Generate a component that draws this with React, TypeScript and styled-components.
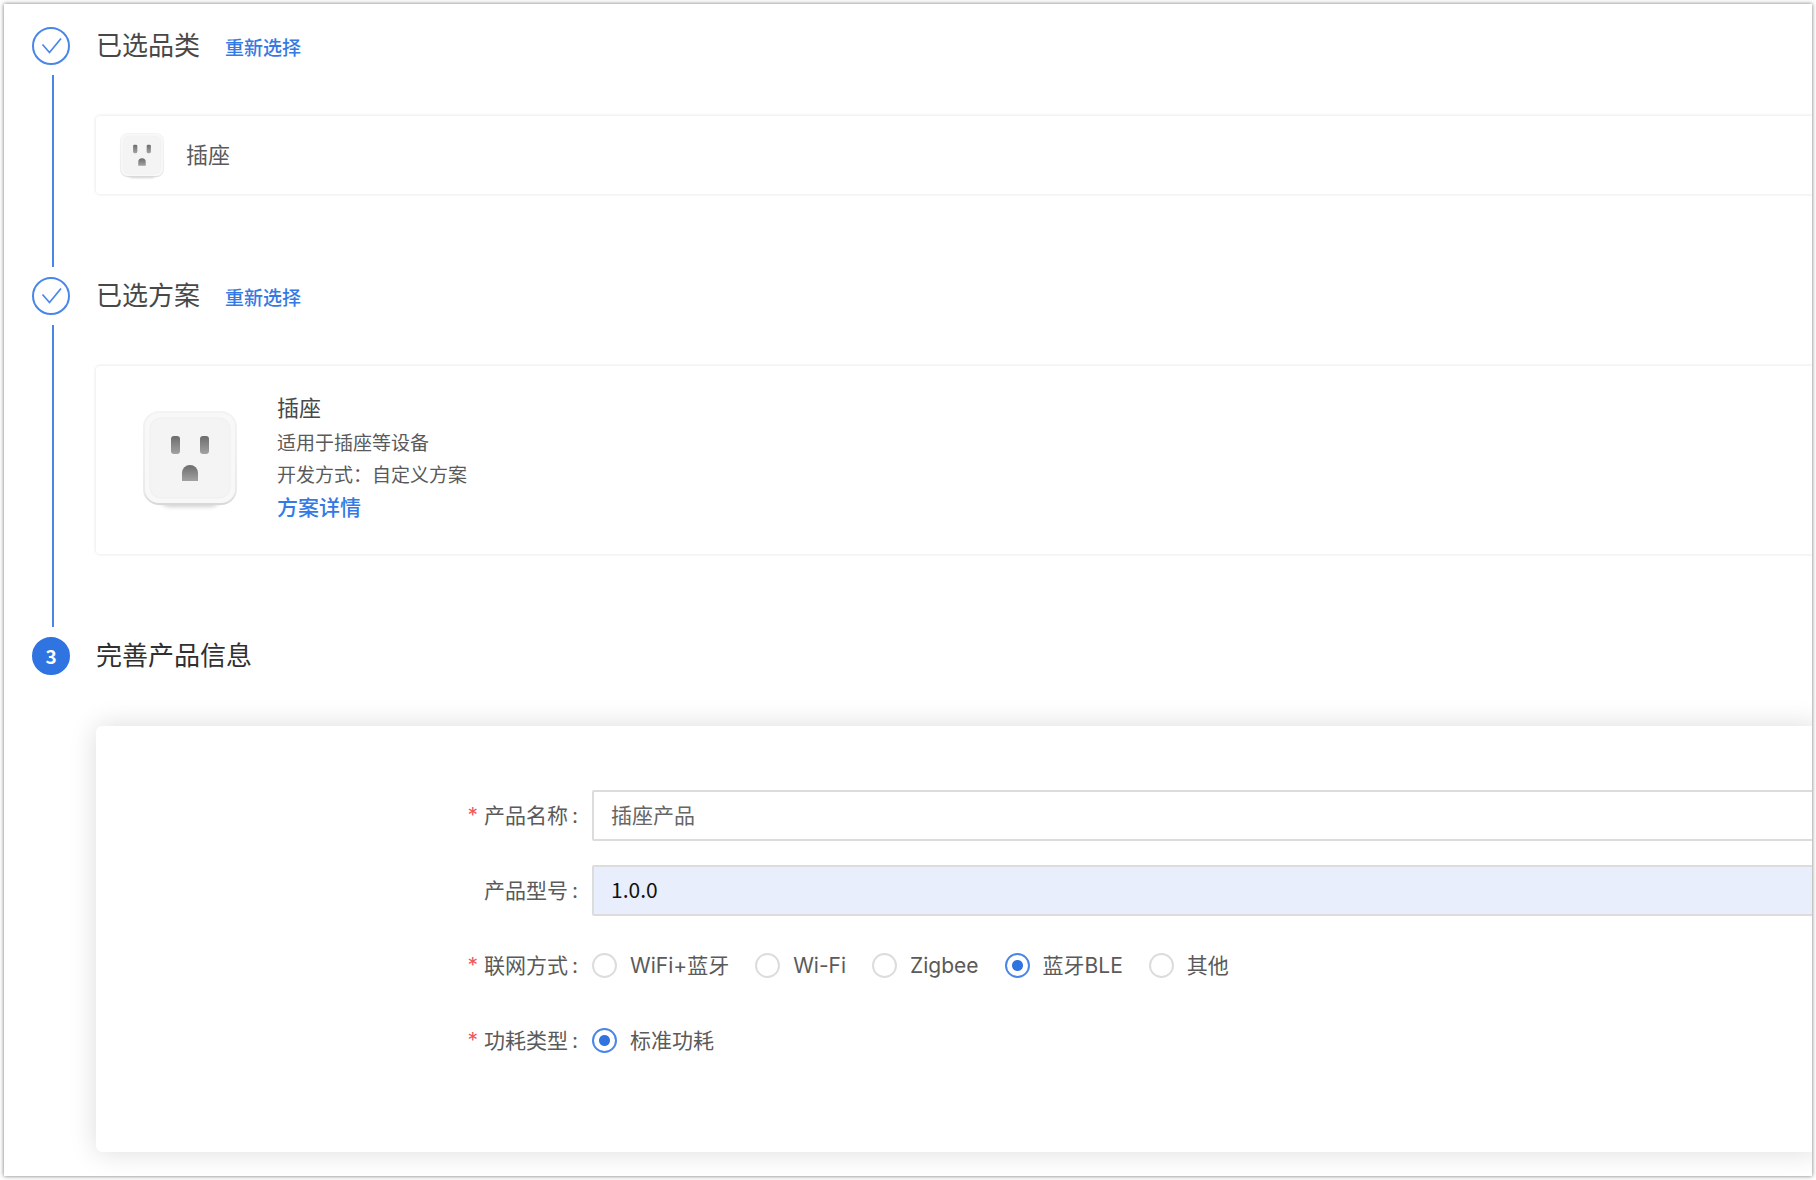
import React, { useState } from "react";
import styled, { createGlobalStyle, css } from "styled-components";

const blue = "#2f74e0";
const linkBlue = "#3579e4";
const lineBlue = "#4a86e8";
const cjkFont = `"Noto Sans CJK SC", "Noto Sans", sans-serif`;

const GlobalStyle = createGlobalStyle`
  *, *::before, *::after { box-sizing: border-box; }
  body {
    margin: 0;
    background: #fdfdfd;
    color: #5a5a5a;
    font-family: Inter, "Noto Sans CJK SC", sans-serif;
    font-size: 21px;
    line-height: 32px;
  }
`;

const Frame = styled.main`
  margin: 4px;
  padding: 22px 0 24px 28px;
  overflow: hidden;
  background: #fff;
  box-shadow: 0 0 4px rgba(0, 0, 0, 0.55);
`;

const StepRow = styled.section`
  display: grid;
  grid-template-columns: 38px minmax(0, 1fr);
  column-gap: 26px;
`;

const Rail = styled.div`
  display: flex;
  flex-direction: column;
`;

const Marker = styled.span<{ $active?: boolean }>`
  display: flex;
  flex: none;
  align-items: center;
  justify-content: center;
  width: 38px;
  height: 38px;
  margin: 1px 0;
  border: 2px solid ${(p) => (p.$active ? blue : lineBlue)};
  border-radius: 50%;
  background: ${(p) => (p.$active ? blue : "#fff")};
  color: #fff;
  font-family: ${cjkFont};
  font-size: 19px;
  font-weight: 700;
`;

const Line = styled.span`
  flex: 1;
  width: 2px;
  margin: 9px 0 9px 20px;
  background: ${lineBlue};
`;

const Body = styled.div<{ $last?: boolean }>`
  padding-bottom: ${(p) => (p.$last ? 0 : 82)}px;
`;

const Header = styled.header`
  display: flex;
  align-items: baseline;
  gap: 25px;
  height: 40px;
  margin-bottom: 50px;
  font-family: ${cjkFont};
`;

const Title = styled.h2<{ $active?: boolean }>`
  margin: 0;
  color: ${(p) => (p.$active ? "#303030" : "#484848")};
  font-size: 26px;
  font-weight: 400;
  line-height: 36px;
`;

const Link = styled.a<{ $large?: boolean }>`
  color: ${linkBlue};
  font-size: ${(p) => (p.$large ? 21 : 19)}px;
  font-weight: 500;
  text-decoration: none;
`;

const surface = css`
  margin-right: -8px;
  border-radius: 4px;
  background: #fff;
`;

const Card = styled.div<{ $large?: boolean }>`
  ${surface}
  display: flex;
  align-items: center;
  gap: ${(p) => (p.$large ? 40 : 22)}px;
  padding: ${(p) => (p.$large ? "26px 47px 30px" : "16px 24px")};
  min-height: 78px;
  box-shadow: 0 0 3px 1px rgba(0, 0, 0, 0.08);
`;

const CardName = styled.span`
  font-size: 22px;
`;

const Details = styled.div`
  display: flex;
  flex-direction: column;
  align-items: flex-start;
  font-size: 19px;
`;

const DetailsTitle = styled.h3`
  margin: 0 0 4px;
  color: #484848;
  font-size: 22px;
  font-weight: 400;
`;

const DetailsLine = styled.p`
  margin: 0;
`;

const Panel = styled.form`
  ${surface}
  display: flex;
  flex-direction: column;
  gap: 24px;
  padding: 64px 0 86px;
  border-radius: 6px;
  box-shadow: 0 0 28px rgba(0, 0, 0, 0.14);
`;

const Field = styled.div`
  display: flex;
  align-items: center;
  height: 51px;
`;

const FieldLabel = styled.label<{ $required?: boolean }>`
  flex: none;
  width: 496px;
  padding-right: 14px;
  text-align: right;

  &::before {
    content: "${(p) => (p.$required ? "*" : "")}";
    margin-right: 6px;
    color: #f0585c;
  }

  &::after {
    content: ":";
    margin-left: 4px;
  }
`;

const TextInput = styled.input<{ $filled?: boolean }>`
  flex: 1;
  min-width: 0;
  height: 51px;
  padding: 0 17px 4px;
  border: 2px solid #dcdcdc;
  border-radius: 2px;
  outline: none;
  background: ${(p) => (p.$filled ? "#e8eefc" : "#fff")};
  color: ${(p) => (p.$filled ? "#111" : "#666")};
  font-family: ${cjkFont};
  font-size: 21px;
`;

const Options = styled.div`
  display: flex;
  align-items: center;
  gap: 26px;
`;

const Option = styled.label`
  display: flex;
  align-items: center;
  gap: 13px;
`;

const Radio = styled.input`
  appearance: none;
  width: 25px;
  height: 25px;
  margin: 0;
  border: 2px solid #dcdcdc;
  border-radius: 50%;
  background: #fff;

  &:checked {
    border-color: ${lineBlue};
    background: radial-gradient(circle, ${blue} 5px, #fff 6px);
  }
`;

const Check = () => (
  <svg width="34" height="34" viewBox="0 0 34 34" fill="none" aria-hidden="true">
    <path d="M8.5 15.5L15.5 23.5L27 9.5" stroke={lineBlue} strokeWidth="1.7" />
  </svg>
);

/* Wall socket: rounded plate, two blade slots and the earth pin. */
const Socket = ({ size, id }: { size: number; id: string }) => (
  <svg width={size} height={size} viewBox="0 0 94 94" overflow="visible" aria-hidden="true">
    <defs>
      <linearGradient id={`${id}-hole`} x1="0" y1="0" x2="0" y2="1">
        <stop offset="0" stopColor="#6c6c6c" />
        <stop offset="1" stopColor="#a2a2a2" />
      </linearGradient>
      <linearGradient id={`${id}-edge`} x1="0" y1="0" x2="0" y2="1">
        <stop offset="0" stopColor="#f3f3f3" />
        <stop offset="0.85" stopColor="#ebebeb" />
        <stop offset="1" stopColor="#d8d8d8" />
      </linearGradient>
      <filter id={`${id}-blur`} x="-20%" y="-20%" width="140%" height="150%">
        <feGaussianBlur stdDeviation="2" />
      </filter>
    </defs>
    <rect x="12" y="22" width="70" height="74" rx="16" fill="#000" opacity="0.18" filter={`url(#${id}-blur)`} />
    <rect x="1" y="1" width="92" height="92" rx="15" fill="#f8f8f8" stroke={`url(#${id}-edge)`} strokeWidth="2" />
    <rect x="7" y="7" width="80" height="80" rx="11" fill="#f4f4f4" stroke="#efefef" />
    <rect x="28" y="25" width="9" height="18" rx="3" fill={`url(#${id}-hole)`} />
    <rect x="57" y="25" width="9" height="18" rx="3" fill={`url(#${id}-hole)`} />
    <path d="M39 70V62a8 8 0 0 1 16 0V70Z" fill={`url(#${id}-hole)`} />
  </svg>
);

type StepProps = {
  title: string;
  number?: number;
  children: React.ReactNode;
};

const Step = ({ title, number, children }: StepProps) => {
  const active = number !== undefined;
  return (
    <StepRow>
      <Rail>
        <Marker $active={active}>{active ? number : <Check />}</Marker>
        {!active && <Line />}
      </Rail>
      <Body $last={active}>
        <Header>
          <Title $active={active}>{title}</Title>
          {!active && <Link href="#">重新选择</Link>}
        </Header>
        {children}
      </Body>
    </StepRow>
  );
};

type RadioFieldProps = {
  label: string;
  name: string;
  options: string[];
  value: string;
  onChange: (value: string) => void;
};

const RadioField = ({ label, name, options, value, onChange }: RadioFieldProps) => (
  <Field role="radiogroup" aria-labelledby={`${name}-label`}>
    <FieldLabel as="span" id={`${name}-label`} $required>
      {label}
    </FieldLabel>
    <Options>
      {options.map((option) => (
        <Option key={option}>
          <Radio type="radio" name={name} checked={value === option} onChange={() => onChange(option)} />
          {option}
        </Option>
      ))}
    </Options>
  </Field>
);

export default function App() {
  const [network, setNetwork] = useState("蓝牙BLE");
  const [power, setPower] = useState("标准功耗");

  return (
    <>
      <GlobalStyle />
      <Frame>
        <Step title="已选品类">
          <Card>
            <Socket size={44} id="small" />
            <CardName>插座</CardName>
          </Card>
        </Step>
        <Step title="已选方案">
          <Card $large>
            <Socket size={94} id="large" />
            <Details>
              <DetailsTitle>插座</DetailsTitle>
              <DetailsLine>适用于插座等设备</DetailsLine>
              <DetailsLine>开发方式：自定义方案</DetailsLine>
              <Link href="#" $large>
                方案详情
              </Link>
            </Details>
          </Card>
        </Step>
        <Step title="完善产品信息" number={3}>
          <Panel>
            <Field>
              <FieldLabel htmlFor="name" $required>
                产品名称
              </FieldLabel>
              <TextInput id="name" defaultValue="插座产品" />
            </Field>
            <Field>
              <FieldLabel htmlFor="model">产品型号</FieldLabel>
              <TextInput id="model" defaultValue="1.0.0" $filled />
            </Field>
            <RadioField
              label="联网方式"
              name="network"
              options={["WiFi+蓝牙", "Wi-Fi", "Zigbee", "蓝牙BLE", "其他"]}
              value={network}
              onChange={setNetwork}
            />
            <RadioField label="功耗类型" name="power" options={["标准功耗"]} value={power} onChange={setPower} />
          </Panel>
        </Step>
      </Frame>
    </>
  );
}
